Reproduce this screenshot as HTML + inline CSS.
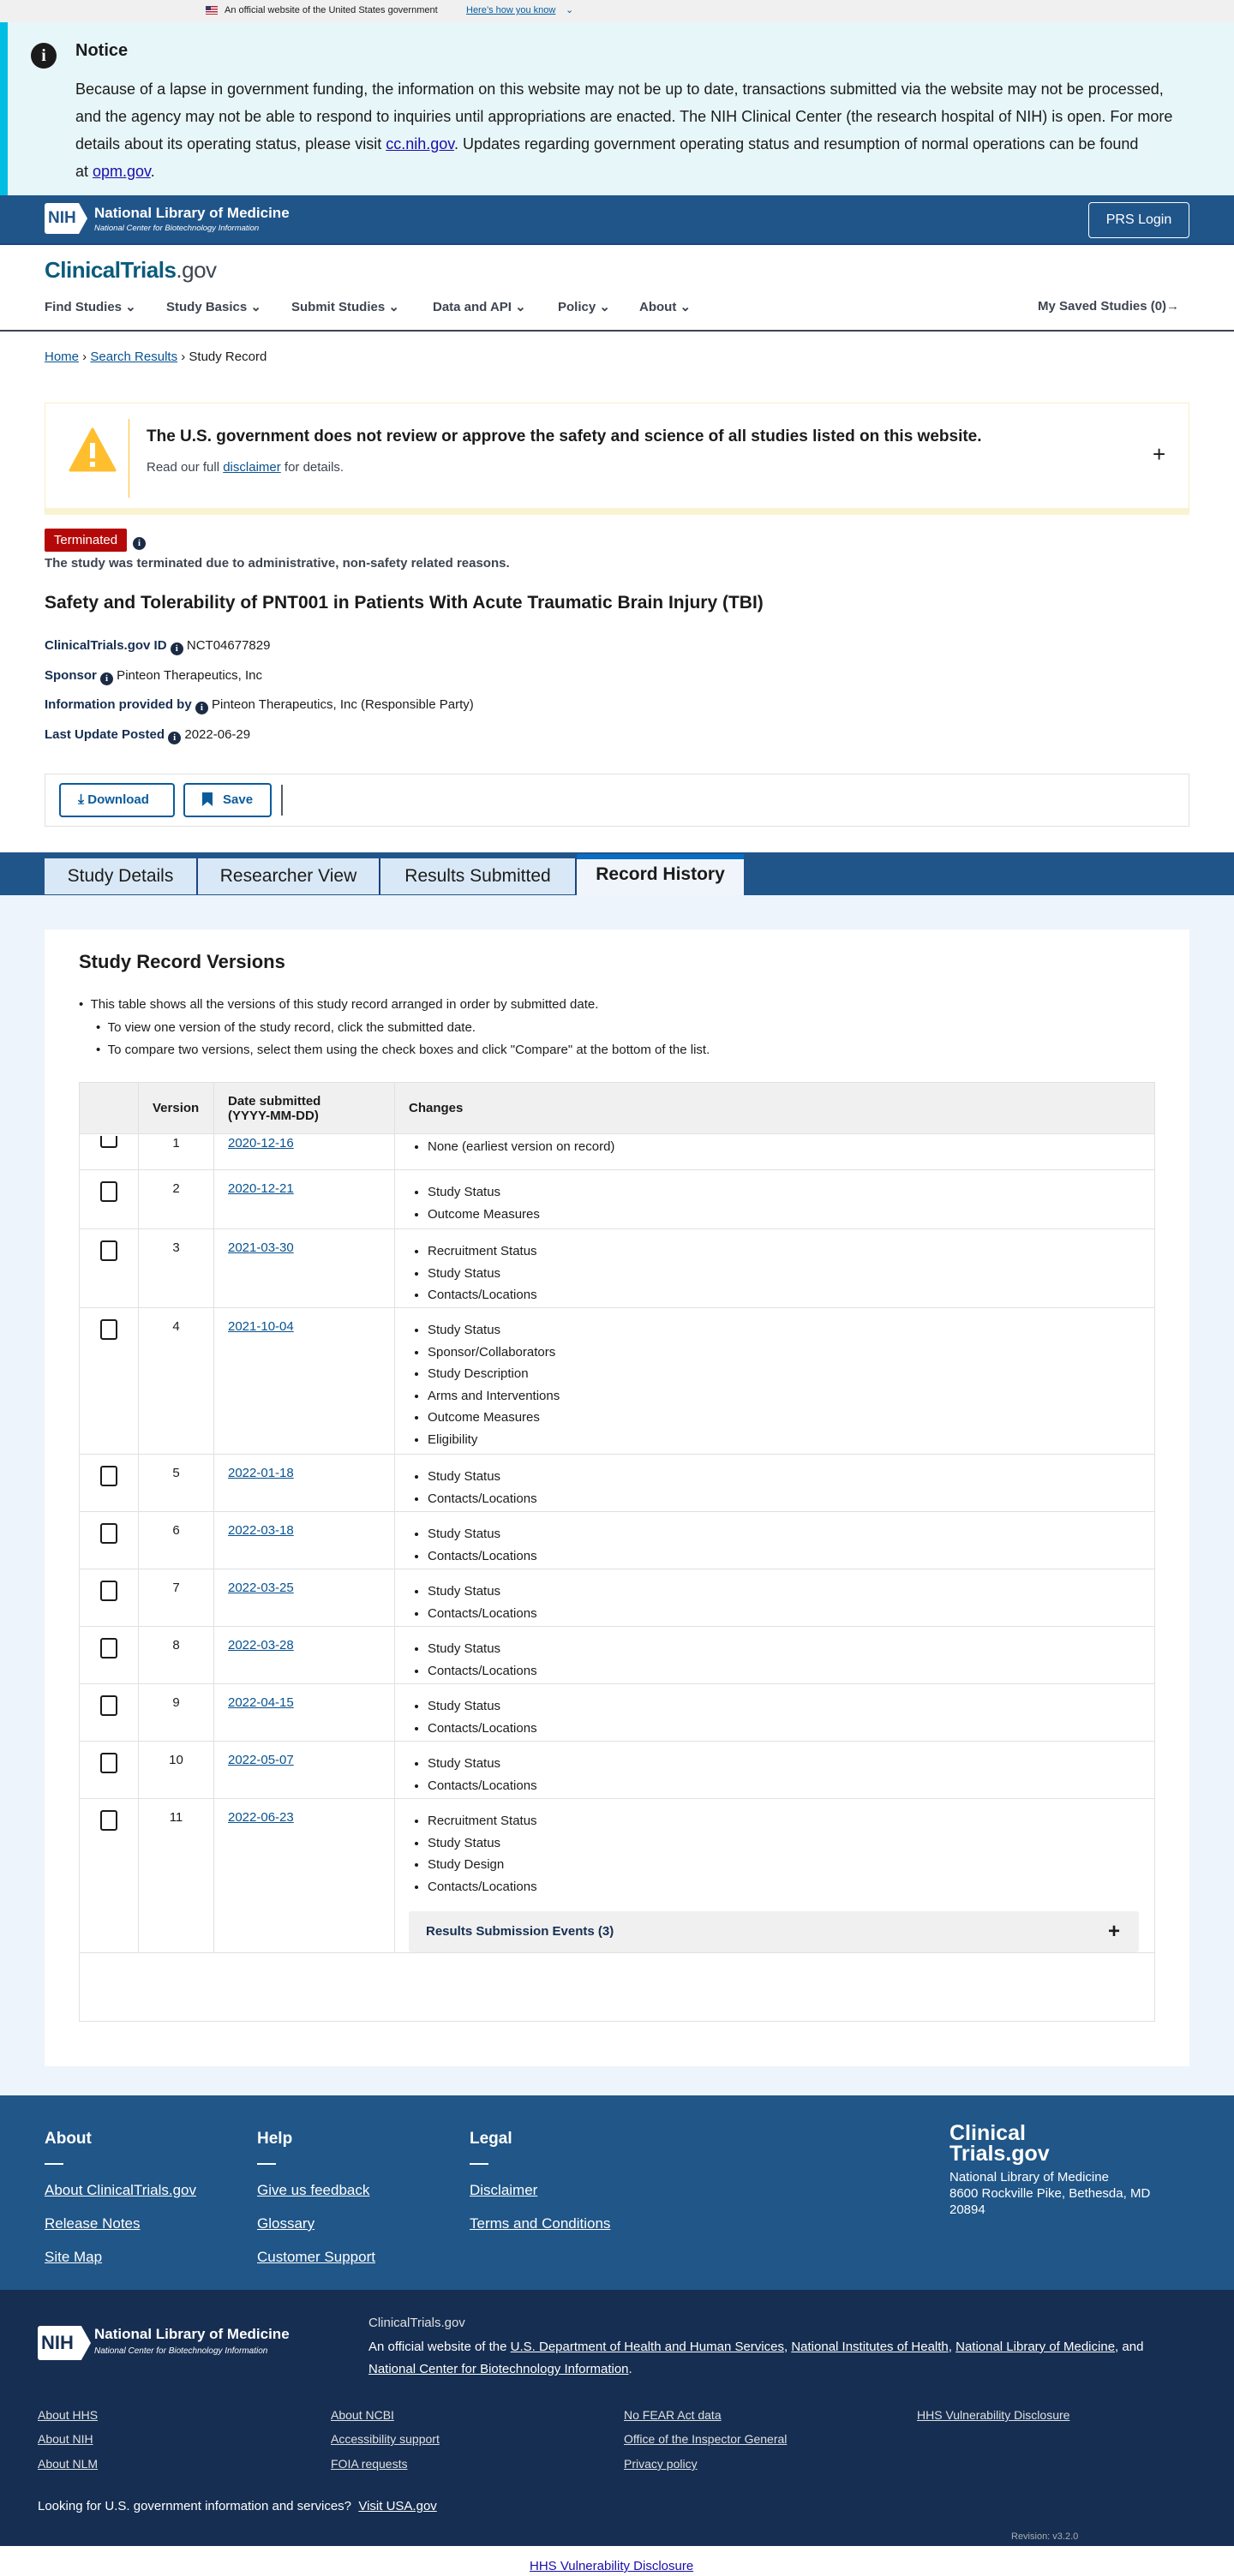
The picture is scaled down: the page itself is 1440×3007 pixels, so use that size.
<!DOCTYPE html>
<html><head><meta charset="utf-8">
<style>
*{box-sizing:border-box;margin:0;padding:0}
body{width:1440px;height:3007px;font-family:"Liberation Sans",Arial,sans-serif;color:#1b1b1b;background:#fff;position:relative;overflow:hidden}
a{color:#075290;text-decoration:underline}
.abs{position:absolute}
.gov{top:0;left:0;width:1440px;height:26px;background:#f0f0f0;font-size:11px}
.notice{top:26px;left:0;width:1440px;height:202px;background:#e7f6f8;border-left:9px solid #00bde3}
.nih{top:228px;left:0;width:1440px;height:58px;background:#20558a;border-bottom:2px solid #1a4480}
.nav a.n{position:absolute;top:349px;font-size:15px;color:#3d4551;text-decoration:none;font-weight:bold}
.info{display:inline-block;width:15px;height:15px;border-radius:50%;background:#1b2b45;color:#fff;font-size:11px;font-weight:bold;text-align:center;line-height:15px;vertical-align:-2px;font-family:"Liberation Serif",serif}
.meta{position:absolute;left:52px;font-size:15px}
.meta b{color:#162e51}
.tab{position:absolute;top:1002px;height:42px;background:#d9e8f6;border-right:2px solid #1a4480;font-size:21px;line-height:42px;text-align:center;color:#1b1b1b}
table{border-collapse:collapse;position:absolute;left:92px;top:1263px;width:1256px;font-size:15px}
td,th{border:1px solid #dfe1e2;vertical-align:top;text-align:left}
th{background:#f0f0f0;font-weight:bold;height:60px;vertical-align:middle;padding:0 16px;font-size:15px}
td{padding:13px 16px 0}
td ul{list-style:disc;padding-left:22px}
td li{line-height:25.5px}
.cb{display:inline-block;width:20px;height:24px;border:2px solid #1b1b1b;border-radius:3px;margin-left:8px}
.num{text-align:center}
.fl a{color:#fff;display:block;font-size:17px;margin-bottom:19px}
.fd a{color:#dfe1e2;font-size:14px;position:absolute}
</style></head><body>

<div class="abs gov"><span style="position:absolute;left:240px;top:7px;width:14px;height:10px;background:repeating-linear-gradient(#b22234 0 1.5px,#fff 1.5px 3px)"><span style="position:absolute;left:0;top:0;width:6px;height:5px;background:#3c3b6e"></span></span><span style="position:absolute;left:262px;top:6px;color:#1b1b1b">An official website of the United States government</span><a style="position:absolute;left:544px;top:6px;color:#005ea2">Here’s how you know</a><span style="position:absolute;left:660px;top:5px;color:#005ea2">⌄</span></div>

<div class="abs notice">
 <div style="position:absolute;left:27px;top:24px;width:30px;height:30px;border-radius:50%;background:#1b1b1b;color:#fff;text-align:center;font:bold 20px/30px 'Liberation Serif',serif">i</div>
 <div style="position:absolute;left:79px;top:22px;font-size:20px;font-weight:bold">Notice</div>
 <div style="position:absolute;left:79px;top:62px;width:1340px;font-size:18px;line-height:32px;white-space:nowrap">Because of a lapse in government funding, the information on this website may not be up to date, transactions submitted via the website may not be processed,<br>and the agency may not be able to respond to inquiries until appropriations are enacted. The NIH Clinical Center (the research hospital of NIH) is open. For more<br>details about its operating status, please visit <a style="color:#1a0dab">cc.nih.gov</a>. Updates regarding government operating status and resumption of normal operations can be found<br>at <a style="color:#1a0dab">opm.gov</a>.</div>
</div>

<div class="abs nih">
 <div style="position:absolute;left:52px;top:9px;width:50px;height:36px;background:#fff;border-radius:3px;color:#20558a;font:bold 19px/36px 'Liberation Sans';padding-left:4px;clip-path:polygon(0 0,80% 0,100% 50%,80% 100%,0 100%)">NIH</div>
 <div style="position:absolute;left:110px;top:11px;color:#fff;font-size:17px;font-weight:bold">National Library of Medicine</div>
 <div style="position:absolute;left:110px;top:33px;color:#fff;font-size:9.5px;font-style:italic">National Center for Biotechnology Information</div>
 <div style="position:absolute;left:1270px;top:8px;width:118px;height:42px;border:1.5px solid #fff;border-radius:4px;color:#fff;font-size:16px;text-align:center;line-height:40px">PRS Login</div>
</div>

<div class="abs" style="left:52px;top:300px;font-size:26px;font-weight:bold;color:#0b5b7b;letter-spacing:-0.5px">ClinicalTrials<span style="color:#3d4551;font-weight:normal">.gov</span></div>
<div class="nav">
<a class="n" style="left:52px">Find Studies ⌄</a><a class="n" style="left:194px">Study Basics ⌄</a><a class="n" style="left:340px">Submit Studies ⌄</a><a class="n" style="left:505px">Data and API ⌄</a><a class="n" style="left:651px">Policy ⌄</a><a class="n" style="left:746px">About ⌄</a><a class="n" style="left:1211px">My Saved Studies (0)→</a>
</div>
<div class="abs" style="left:0;top:385px;width:1440px;height:2px;background:#3d4551"></div>

<div class="abs" style="left:52px;top:408px;font-size:15px"><a>Home</a> › <a>Search Results</a> › Study Record</div>

<div class="abs" style="left:52px;top:470px;width:1336px;height:131px;border:1px solid #f5eec8;border-bottom:8px solid #faf3d1;background:#fff">
 <svg style="position:absolute;left:27px;top:28px" width="56" height="52" viewBox="0 0 56 52"><path d="M28 2 L54 50 L2 50 Z" fill="#ffbe2e" stroke="#ffbe2e" stroke-width="3" stroke-linejoin="round"/><rect x="25" y="18" width="6" height="18" fill="#fff"/><rect x="25" y="40" width="6" height="6" fill="#fff"/></svg>
 <div style="position:absolute;left:97px;top:18px;width:1px;height:92px;background:#ffbe2e"></div>
 <div style="position:absolute;left:118px;top:28px;font-size:19px;font-weight:bold">The U.S. government does not review or approve the safety and science of all studies listed on this website.</div>
 <div style="position:absolute;left:118px;top:66px;font-size:15px;color:#3d4551">Read our full <a>disclaimer</a> for details.</div>
 <div style="position:absolute;left:1292px;top:44px;font-size:26px">+</div>
</div>

<div class="abs" style="left:52px;top:617px;width:96px;height:27px;background:#b50909;border-radius:2px;color:#fff;font-size:15px;line-height:27px;text-align:center">Terminated</div>
<div class="abs" style="left:155px;top:622px"><span class="info">i</span></div>
<div class="abs" style="left:52px;top:649px;font-size:15px;font-weight:bold;color:#3d4551">The study was terminated due to administrative, non-safety related reasons.</div>
<div class="abs" style="left:52px;top:692px;font-size:21px;font-weight:bold;color:#1b1b1b">Safety and Tolerability of PNT001 in Patients With Acute Traumatic Brain Injury (TBI)</div>
<div class="meta" style="top:745px"><b>ClinicalTrials.gov ID</b> <span class="info">i</span> NCT04677829</div>
<div class="meta" style="top:780px"><b>Sponsor</b> <span class="info">i</span> Pinteon Therapeutics, Inc</div>
<div class="meta" style="top:814px"><b>Information provided by</b> <span class="info">i</span> Pinteon Therapeutics, Inc (Responsible Party)</div>
<div class="meta" style="top:849px"><b>Last Update Posted</b> <span class="info">i</span> 2022-06-29</div>

<div class="abs" style="left:52px;top:903px;width:1336px;height:62px;border:1px solid #dfe1e2">
 <div style="position:absolute;left:16px;top:10px;width:135px;height:40px;border:2px solid #0b5b9b;border-radius:4px;color:#0b5b9b;font-size:15px;font-weight:bold;line-height:36px;padding-left:20px"><span style="font-size:16px">⤓</span> Download</div>
 <div style="position:absolute;left:161px;top:10px;width:103px;height:40px;border:2px solid #0b5b9b;border-radius:4px;color:#0b5b9b;font-size:15px;font-weight:bold;line-height:36px;padding-left:20px"><svg width="12" height="16" style="vertical-align:-3px;margin-right:12px"><path d="M0 0H12V16L6 11L0 16Z" fill="#0b5b9b"/></svg>Save</div>
 <div style="position:absolute;left:275px;top:12px;width:2px;height:36px;background:#565c65"></div>
</div>

<div class="abs" style="left:0;top:995px;width:1440px;height:50px;background:#20558a"></div>
<div class="tab" style="left:52px;width:179px">Study Details</div>
<div class="tab" style="left:231px;width:213px">Researcher View</div>
<div class="tab" style="left:444px;width:229px">Results Submitted</div>
<div class="tab" style="left:673px;top:997px;height:48px;width:195px;background:#f0f5fb;border-top:6px solid #0b6cc4;border-right:none;font-weight:bold;line-height:36px">Record History</div>

<div class="abs" style="left:0;top:1045px;width:1440px;height:1401px;background:#eef4fb"></div>
<div class="abs" style="left:52px;top:1085px;width:1336px;height:1327px;background:#fff"></div>
<div class="abs" style="left:92px;top:1110px;font-size:22px;font-weight:bold">Study Record Versions</div>
<div class="abs" style="left:92px;top:1160px;font-size:15px;line-height:26.5px">
 <div>• &nbsp;This table shows all the versions of this study record arranged in order by submitted date.</div>
 <div style="padding-left:20px">• &nbsp;To view one version of the study record, click the submitted date.</div>
 <div style="padding-left:20px">• &nbsp;To compare two versions, select them using the check boxes and click "Compare" at the bottom of the list.</div>
</div>

<table>
<tr><th style="width:69px"></th><th style="width:88px">Version</th><th style="width:211px">Date submitted<br>(YYYY-MM-DD)</th><th>Changes</th></tr>
<tr style="height:42px"><td style="padding-top:2px"><span class="cb" style="height:14px;border-top:none;border-radius:0 0 3px 3px"></span></td><td class="num" style="padding-top:2px">1</td><td style="padding-top:2px"><a>2020-12-16</a></td><td style="padding-top:2px"><ul><li>None (earliest version on record)</li></ul></td></tr>
<tr style="height:69px"><td><span class="cb"></span></td><td class="num">2</td><td><a>2020-12-21</a></td><td><ul><li>Study Status</li><li>Outcome Measures</li></ul></td></tr>
<tr style="height:92px"><td><span class="cb"></span></td><td class="num">3</td><td><a>2021-03-30</a></td><td><ul><li>Recruitment Status</li><li>Study Status</li><li>Contacts/Locations</li></ul></td></tr>
<tr style="height:171px"><td><span class="cb"></span></td><td class="num">4</td><td><a>2021-10-04</a></td><td><ul><li>Study Status</li><li>Sponsor/Collaborators</li><li>Study Description</li><li>Arms and Interventions</li><li>Outcome Measures</li><li>Eligibility</li></ul></td></tr>
<tr style="height:67px"><td><span class="cb"></span></td><td class="num">5</td><td><a>2022-01-18</a></td><td><ul><li>Study Status</li><li>Contacts/Locations</li></ul></td></tr>
<tr style="height:67px"><td><span class="cb"></span></td><td class="num">6</td><td><a>2022-03-18</a></td><td><ul><li>Study Status</li><li>Contacts/Locations</li></ul></td></tr>
<tr style="height:67px"><td><span class="cb"></span></td><td class="num">7</td><td><a>2022-03-25</a></td><td><ul><li>Study Status</li><li>Contacts/Locations</li></ul></td></tr>
<tr style="height:67px"><td><span class="cb"></span></td><td class="num">8</td><td><a>2022-03-28</a></td><td><ul><li>Study Status</li><li>Contacts/Locations</li></ul></td></tr>
<tr style="height:67px"><td><span class="cb"></span></td><td class="num">9</td><td><a>2022-04-15</a></td><td><ul><li>Study Status</li><li>Contacts/Locations</li></ul></td></tr>
<tr style="height:67px"><td><span class="cb"></span></td><td class="num">10</td><td><a>2022-05-07</a></td><td><ul><li>Study Status</li><li>Contacts/Locations</li></ul></td></tr>
<tr style="height:179px"><td><span class="cb"></span></td><td class="num">11</td><td><a>2022-06-23</a></td><td><ul><li>Recruitment Status</li><li>Study Status</li><li>Study Design</li><li>Contacts/Locations</li></ul>
<div style="margin:16px 0 0 0;width:852px;height:48px;background:#f0f0f0;border-radius:3px;position:relative;font-weight:bold;color:#162e51;line-height:48px;padding-left:20px">Results Submission Events (3)<span style="position:absolute;right:22px;top:0;font-size:24px;color:#1b1b1b">+</span></div></td></tr>
<tr style="height:80px"><td colspan="4"></td></tr>
</table>

<div class="abs" style="left:0;top:2446px;width:1440px;height:227px;background:#205688">
 <div class="fl" style="position:absolute;left:52px;top:40px"><div style="color:#fff;font-size:19px;font-weight:bold">About</div><div style="width:22px;height:2px;background:#fff;margin:17px 0 20px"></div><a>About ClinicalTrials.gov</a><a>Release Notes</a><a>Site Map</a></div>
 <div class="fl" style="position:absolute;left:300px;top:40px"><div style="color:#fff;font-size:19px;font-weight:bold">Help</div><div style="width:22px;height:2px;background:#fff;margin:17px 0 20px"></div><a>Give us feedback</a><a>Glossary</a><a>Customer Support</a></div>
 <div class="fl" style="position:absolute;left:548px;top:40px"><div style="color:#fff;font-size:19px;font-weight:bold">Legal</div><div style="width:22px;height:2px;background:#fff;margin:17px 0 20px"></div><a>Disclaimer</a><a>Terms and Conditions</a></div>
 <div style="position:absolute;left:1108px;top:32px;color:#fff;font-size:25px;font-weight:bold;line-height:24px">Clinical<br>Trials.gov</div>
 <div style="position:absolute;left:1108px;top:86px;color:#fff;font-size:15px;line-height:19px">National Library of Medicine<br>8600 Rockville Pike, Bethesda, MD<br>20894</div>
</div>

<div class="abs fd" style="left:0;top:2673px;width:1440px;height:299px;background:#162e51">
 <div style="position:absolute;left:44px;top:42px;width:62px;height:40px;background:#fff;border-radius:3px;color:#162e51;font:bold 22px/40px 'Liberation Sans';padding-left:4px;clip-path:polygon(0 0,82% 0,100% 50%,82% 100%,0 100%)">NIH</div>
 <div style="position:absolute;left:110px;top:42px;color:#fff;font-size:17px;font-weight:bold">National Library of Medicine</div>
 <div style="position:absolute;left:110px;top:66px;color:#fff;font-size:10px;font-style:italic">National Center for Biotechnology Information</div>
 <div style="position:absolute;left:430px;top:30px;color:#dfe1e2;font-size:15px">ClinicalTrials.gov</div>
 <div style="position:absolute;left:430px;top:54px;width:940px;color:#fff;font-size:15px;line-height:26px">An official website of the <a style="color:#fff;position:static;font-size:15px">U.S. Department of Health and Human Services</a>, <a style="color:#fff;position:static;font-size:15px">National Institutes of Health</a>, <a style="color:#fff;position:static;font-size:15px">National Library of Medicine</a>, and <a style="color:#fff;position:static;font-size:15px">National Center for Biotechnology Information</a>.</div>
 <a style="left:44px;top:138px">About HHS</a><a style="left:44px;top:166px">About NIH</a><a style="left:44px;top:195px">About NLM</a>
 <a style="left:386px;top:138px">About NCBI</a><a style="left:386px;top:166px">Accessibility support</a><a style="left:386px;top:195px">FOIA requests</a>
 <a style="left:728px;top:138px">No FEAR Act data</a><a style="left:728px;top:166px">Office of the Inspector General</a><a style="left:728px;top:195px">Privacy policy</a>
 <a style="left:1070px;top:138px">HHS Vulnerability Disclosure</a>
 <div style="position:absolute;left:44px;top:244px;color:#fff;font-size:15px">Looking for U.S. government information and services? &nbsp;<a style="color:#fff;position:static;font-size:15px">Visit USA.gov</a></div>
 <div style="position:absolute;left:1180px;top:282px;color:#a9aeb1;font-size:11px">Revision: v3.2.0</div>
</div>
<a class="abs" style="left:618px;top:2987px;font-size:15px;color:#1a0dab">HHS Vulnerability Disclosure</a>
</body></html>
